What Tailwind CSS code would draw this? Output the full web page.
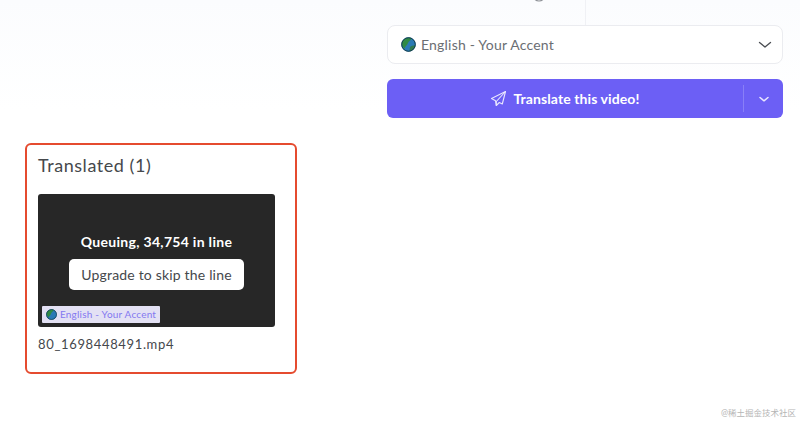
<!DOCTYPE html>
<html><head><meta charset="utf-8">
<script src="https://cdn.jsdelivr.net/npm/@tailwindcss/browser@4"></script>
</head>
<body class="bg-white">
<div class="relative w-[800px] h-[422px] overflow-hidden bg-white font-['Lato','Noto_Sans_CJK_SC',sans-serif]">
  <div class="absolute left-0 top-0 w-[800px] h-[110px] bg-gradient-to-b from-[#fbfcfe] to-white"></div>
  <div class="absolute left-[585px] top-0 w-px h-[25px] bg-[#f0f1f5]"></div>
  <svg class="absolute left-[532px] top-[-12px]" width="14" height="14" viewBox="0 0 14 14" fill="none" stroke="#8d9096" stroke-width="1.200"><circle cx="7" cy="7" r="6"/></svg>
  <div class="relative flex justify-end pr-[17px] pt-[25px]">
    <div class="flex flex-col gap-[15px] w-[396px]">
      <div class="flex items-center justify-between h-[39px] pl-[13px] pr-[9px] bg-white border border-[#ebecf0] rounded-[8px]">
        <div class="flex items-center gap-[5px]">
          <svg width="15" height="15" viewBox="0 0 15 15"><circle cx="7.5" cy="7.5" r="7.2" fill="#2a7ab5"/><path d="M2 3.500C4 1 8 0 10.500 1.200 10 3.500 7.500 4 7 6 6.500 8 4.500 9 3.500 11.500 1 9.500 0 6 2 3.500Z" fill="#2f8a45"/><path d="M9.500 9.500c1.500-1 3.500-1.200 4.800-.8-.6 2.600-2.600 4.800-5.300 5.600-.7-1.600-.4-3.600.5-4.800Z" fill="#2f7a50"/><circle cx="7.500" cy="7.500" r="6.800" fill="none" stroke="#123c4a"/></svg>
          <span class="text-[14px] text-[#6b6e73] tracking-[0.2px]">English - Your Accent</span>
        </div>
        <svg width="16" height="16" viewBox="0 0 16 16" fill="none" stroke="#4a4d52" stroke-width="1.300" stroke-linecap="round" stroke-linejoin="round"><path d="M2.500 5.500 8 10l5.500-4.500"/></svg>
      </div>
      <div class="flex items-center h-[39px] rounded-[6px] bg-[#6c5ff5] text-white">
        <div class="flex-1 flex items-center justify-center gap-[6px]">
          <svg width="17" height="17" viewBox="0 0 17 17" fill="none" stroke="#e9e7fe" stroke-width="1.100" stroke-linecap="round" stroke-linejoin="round"><path d="M15.500 1.500 1.500 8.500l4 2.200.8 4.800 3-3 3 1.500 3.200-12.500Z"/><path d="M15.500 1.500 6.300 11.500v4"/></svg>
          <span class="text-[14px] font-bold tracking-[0.1px]">Translate this video!</span>
        </div>
        <div class="flex items-center justify-center w-[40px] h-[27px] border-l border-white/20">
          <svg width="12" height="12" viewBox="0 0 12 12" fill="none" stroke="#e9e7fe" stroke-width="1.500" stroke-linecap="round" stroke-linejoin="round"><path d="M2 4.500 6 7.800l4-3.300"/></svg>
        </div>
      </div>
    </div>
  </div>
  <div class="relative ml-[25px] mt-[25px] w-[272px] h-[231px] border-2 border-[#e54b2f] rounded-[6px] pl-[11px] pt-[9px]">
    <div class="text-[18px] leading-[22px] text-[#45484c] tracking-[0.55px]">Translated (1)</div>
    <div class="relative mt-[18px] w-[237px] h-[133px] bg-[#272727] rounded-[3px] flex flex-col items-center pt-[39px]">
      <div class="text-[14px] leading-[18px] font-bold text-white tracking-[0.3px]">Queuing, 34,754 in line</div>
      <div class="mt-[8px] flex items-center justify-center w-[175px] h-[31px] bg-white rounded-[5px] text-[14px] text-[#45484c] tracking-[0.18px]">Upgrade to skip the line</div>
      <div class="absolute left-[4px] bottom-[4px] flex items-center gap-[3px] h-[17px] w-[118px] pl-[4px] pb-[1px] bg-[#e3e1f4] rounded-[1px]">
        <svg width="11" height="11" viewBox="0 0 15 15"><circle cx="7.500" cy="7.500" r="7.200" fill="#2a7ab5"/><path d="M2 3.500C4 1 8 0 10.500 1.200 10 3.500 7.500 4 7 6 6.500 8 4.500 9 3.500 11.500 1 9.500 0 6 2 3.500Z" fill="#2f8a45"/><circle cx="7.500" cy="7.500" r="6.800" fill="none" stroke="#123c4a"/></svg>
        <span class="text-[10px] text-[#8479f0] tracking-[0.2px]">English - Your Accent</span>
      </div>
    </div>
    <div class="mt-[8px] text-[13px] leading-[18px] text-[#45484c] tracking-[0.65px]">80_1698448491.mp4</div>
  </div>
  <div class="absolute right-[4px] top-[407px] text-[8.500px] leading-[12px] text-[#b5b5b5]">@稀土掘金技术社区</div>
</div>
</body></html>
